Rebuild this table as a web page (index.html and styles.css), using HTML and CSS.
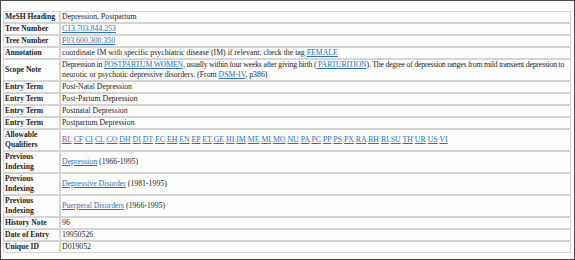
FILE: index.html
```html
<!DOCTYPE html>
<html>
<head>
<meta charset="utf-8">
<link rel="stylesheet" href="styles.css">
</head>
<body>
<div class="frame">
<table class="mesh">
<tr><th>MeSH Heading</th><td>Depression, Postpartum</td></tr>
<tr><th>Tree Number</th><td><a href="#">C13.703.844.253</a></td></tr>
<tr><th>Tree Number</th><td><a href="#">F03.600.300.350</a></td></tr>
<tr><th>Annotation</th><td>coordinate IM with specific psychiatric disease (IM) if relevant; check the tag <a href="#">FEMALE</a></td></tr>
<tr><th>Scope Note</th><td><span class="line">Depression in <a href="#">POSTPARTUM WOMEN</a>, usually within four weeks after giving birth (<a href="#"> PARTURITION</a>). The degree of depression ranges from mild transient depression to</span><br>neurotic or psychotic depressive disorders. (From <a href="#">DSM-IV</a>, p386)</td></tr>
<tr><th>Entry Term</th><td>Post-Natal Depression</td></tr>
<tr><th>Entry Term</th><td>Post-Partum Depression</td></tr>
<tr><th>Entry Term</th><td>Postnatal Depression</td></tr>
<tr><th>Entry Term</th><td>Postpartum Depression</td></tr>
<tr><th>Allowable Qualifiers</th><td><a href="#" class="visited">BL</a> <a href="#">CF</a> <a href="#">CI</a> <a href="#">CL</a> <a href="#">CO</a> <a href="#">DH</a> <a href="#">DI</a> <a href="#">DT</a> <a href="#">EC</a> <a href="#">EH</a> <a href="#">EN</a> <a href="#">EP</a> <a href="#">ET</a> <a href="#">GE</a> <a href="#">HI</a> <a href="#">IM</a> <a href="#">ME</a> <a href="#">MI</a> <a href="#">MO</a> <a href="#">NU</a> <a href="#">PA</a> <a href="#">PC</a> <a href="#">PP</a> <a href="#">PS</a> <a href="#">PX</a> <a href="#">RA</a> <a href="#">RH</a> <a href="#">RI</a> <a href="#">SU</a> <a href="#">TH</a> <a href="#">UR</a> <a href="#">US</a> <a href="#">VI</a></td></tr>
<tr><th>Previous Indexing</th><td><a href="#">Depression</a> (1966-1995)</td></tr>
<tr><th>Previous Indexing</th><td><a href="#">Depressive Disorder</a> (1981-1995)</td></tr>
<tr><th>Previous Indexing</th><td><a href="#">Puerperal Disorders</a> (1966-1995)</td></tr>
<tr><th>History Note</th><td>96</td></tr>
<tr><th>Date of Entry</th><td>19950526</td></tr>
<tr><th>Unique ID</th><td>D019052</td></tr>
</table>
</div>
</body>
</html>
```
FILE: styles.css
```css
html, body {
  margin: 0;
  padding: 0;
  background: #ffffff;
}
.frame {
  box-sizing: border-box;
  width: 575px;
  height: 260px;
  border: 1px solid #4a4a4a;
  border-bottom-color: #5a3c3c;
  padding: 10px 3px 0 2px;
  background: #fefefe;
}
.mesh {
  width: 100%;
  table-layout: fixed;
  border-collapse: separate;
  border-spacing: 0;
  font-family: "Liberation Serif", "Times New Roman", serif;
  font-size: 7.8px;
  line-height: 10px;
  color: #222;
}
.mesh th, .mesh td {
  border: 1px solid #d4d4d4;
  padding: 0 2px;
  vertical-align: middle;
  text-align: left;
}
.mesh th {
  width: 53px;
  padding: 0 1px;
  font-size: 7.6px;
  font-weight: bold;
  color: #1a1a1a;
}
.mesh td {
  padding: 0 1px;
}
.mesh .line {
  white-space: nowrap;
  letter-spacing: -0.22px;
}
.mesh a {
  color: #2f6fb3;
  text-decoration: underline;
}
.mesh a.visited {
  color: #a03c96;
}
```
